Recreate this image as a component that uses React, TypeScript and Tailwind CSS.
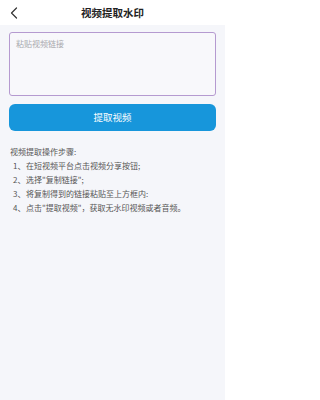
import { useState } from 'react';

const steps = [
    '在短视频平台点击视频分享按钮;',
    '选择"复制链接";',
    '将复制得到的链接粘贴至上方框内:',
    '点击"提取视频"，获取无水印视频或者音频。',
];

export default function App() {
    const [url, setUrl] = useState('');

    return (
        <div
            className="w-[225px] h-[400px] bg-[#f5f6fa] flex flex-col"
            style={{ fontFamily: '"Noto Sans CJK SC", "Noto Sans", sans-serif' }}
        >
            <div className="h-[25px] bg-white flex items-center relative">
                <button className="absolute left-[8px] top-[6px] w-[12px] h-[14px] flex items-center justify-center">
                    <svg width="8" height="12" viewBox="0 0 8 12" fill="none" stroke="#333" strokeWidth={1.2}>
                        <path d="M6.5 1L1.5 6l5 5" strokeLinecap="round" strokeLinejoin="round" />
                    </svg>
                </button>
                <h1 className="flex-1 text-center text-[10.5px] font-bold text-[#222] leading-none pt-[1px]">
                    视频提取水印
                </h1>
            </div>

            <div className="px-[9px] pt-[7px]">
                <textarea
                    value={url}
                    onChange={(e) => setUrl(e.target.value)}
                    placeholder="粘贴视频链接"
                    className="block w-full h-[64px] resize-none rounded-[3px] border border-[#b59ad0] bg-[#f8f8fb] px-[6px] pt-[5px] text-[8px] leading-[12px] text-[#333] placeholder:text-[#a9a9ae] outline-none caret-[#2a8bb5]"
                />

                <button className="mt-[8px] w-full h-[27px] rounded-[6px] bg-[#1796db] text-white text-[9.5px] leading-none">
                    提取视频
                </button>

                <div className="mt-[14px] pl-[1px] text-[8px] leading-[14px] text-[#555]">
                    <p>视频提取操作步骤:</p>
                    <ol className="pl-[3px]">
                        {steps.map((step, i) => (
                            <li key={i} className="flex">
                                <span className="w-[13px]">{i + 1}、</span>
                                <span>{step}</span>
                            </li>
                        ))}
                    </ol>
                </div>
            </div>
        </div>
    );
}
